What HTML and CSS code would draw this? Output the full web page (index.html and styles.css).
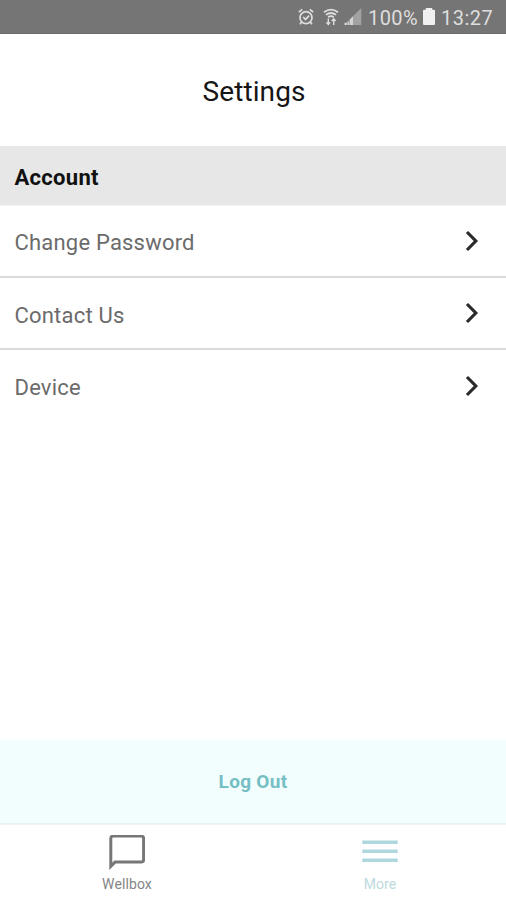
FILE: index.html
```html
<!DOCTYPE html>
<html lang="en">
<head>
<meta charset="utf-8">
<title>Settings</title>
<link rel="stylesheet" href="styles.css">
</head>
<body>
<div class="screen">
  <div class="status">
    <svg class="alarm" width="16" height="18" viewBox="0 0 16 18" fill="none" stroke="#dedede" stroke-width="1.7"><circle cx="8" cy="9.7" r="6"/><path d="M.8 4.2L4.2 1.4M15.2 4.2l-3.4-2.8M3.8 13.8L2 16.3M12.2 13.8L14 16.3M5.2 9l2.3 2.4 3.6-3.8"/></svg>
    <svg class="wifi" width="16" height="18" viewBox="0 0 16 18" fill="none" stroke="#dedede" stroke-width="1.8"><path d="M1 4.2Q8-1 15 4.2M3 6.8Q8 3.2 13 6.8M5.2 9.2Q8 7 10.8 9.2"/><path d="M5.3 10.5v6M3.4 14.4l1.9 2.1 1.9-2.1M10.7 17v-6M8.8 13l1.9-2.1 1.9 2.1" stroke-width="1.4"/></svg>
    <svg class="signal" width="18" height="18" viewBox="0 0 18 18"><path d="M17.3 0v17H9V8.3z" fill="#a2a2a2"/><path d="M5.5 11.8L9 8.3V17H5.5z" fill="#d4d4d4"/><path d="M.6 14.8h2.2V17H.6zM3.5 13.4h1.4V17H3.5z" fill="#dedede"/></svg>
    <span class="percent">100%</span>
    <svg class="battery" width="12" height="17" viewBox="0 0 12 17"><path d="M2.8 0h6.4v1.7H11q1 0 1 1V16q0 1-1 1H1q-1 0-1-1V2.7q0-1 1-1h1.8z" fill="#f0f0f0"/></svg>
    <span class="time">13:27</span>
  </div>
  <header class="header"><h1 class="title">Settings</h1></header>
  <h2 class="section">Account</h2>
  <main class="list">
    <div class="row"><span>Change Password</span><svg class="chevron" width="14" height="22" viewBox="0 0 14 22"><path d="M2 2l8.8 9L2 20"/></svg></div>
    <div class="row"><span>Contact Us</span><svg class="chevron" width="14" height="22" viewBox="0 0 14 22"><path d="M2 2l8.8 9L2 20"/></svg></div>
    <div class="row"><span>Device</span><svg class="chevron" width="14" height="22" viewBox="0 0 14 22"><path d="M2 2l8.8 9L2 20"/></svg></div>
  </main>
  <div class="logout"><span>Log Out</span></div>
  <nav class="tabs">
    <div class="tab">
      <svg width="36" height="36" viewBox="0 0 36 36" fill="none" stroke="#777" stroke-width="3"><path d="M1.8 31.3V3.5q0-2.4 2.4-2.4h28q2.4 0 2.4 2.4v21.2q0 2.4-2.4 2.4H6z"/></svg>
      <span class="tab-label">Wellbox</span>
    </div>
    <div class="tab active">
      <svg width="36" height="36" viewBox="0 0 36 36" fill="#afd7dd"><path d="M.3 5.4h35.4V9H.3zM.3 14.4h35.4V18H.3zM.3 23.4h35.4V27H.3z"/></svg>
      <span class="tab-label">More</span>
    </div>
  </nav>
</div>
</body>
</html>
```
FILE: styles.css
```css
* { box-sizing: border-box; }
body { margin: 0; font-family: Roboto, "Liberation Sans", sans-serif; background: #fff; }
.screen { height: 900px; display: flex; flex-direction: column; overflow: hidden; }
.status {
  height: 34px; flex: none; padding-right: 13px; background: #757575;
  border-bottom: 1px solid #696969; color: #dedede;
  display: flex; align-items: center; justify-content: flex-end;
  font-size: 20px; line-height: 34px;
}
.status span { padding-top: 3px; }
.wifi { margin-left: 9px; }
.signal { margin-left: 5px; }
.percent { margin-left: 6px; width: 52px; letter-spacing: .4px; }
.battery { margin-left: 3px; }
.time { margin-left: 6px; width: 52px; letter-spacing: .5px; }
.header { height: 112px; flex: none; display: flex; align-items: center; justify-content: center; padding: 2px 0 0 2px; }
.title { margin: 0; font-size: 28px; font-weight: 400; letter-spacing: .1px; color: #161616; }
.section {
  margin: 0; height: 60px; flex: none; padding: 2px 14.5px 0; background: #e7e7e7;
  border-bottom: 1px solid #f3f3f3;
  font-size: 22px; line-height: 60px; font-weight: 700; letter-spacing: .3px; color: #111;
}
.list { flex: 1; }
.row {
  height: 72px; padding: 0 27px 0 14.5px; color: #6b6b6b;
  display: flex; align-items: center; justify-content: space-between;
  border-bottom: 2px solid #dadada;
  font-size: 22px; letter-spacing: .2px;
}
.row:last-child { height: 73px; border-bottom-color: transparent; }
.row span { padding-top: 2px; }
.row + .row span { padding-top: 4px; }
.chevron { fill: none; stroke: #2b2b2b; stroke-width: 3.2; }
.logout {
  height: 84px; flex: none; background: #f2fdfd; border-bottom: 1px solid #e9f0f1;
  display: flex; align-items: center; justify-content: center;
  font-size: 19px; font-weight: 700; letter-spacing: .3px; color: #75bfc4;
}
.tabs { height: 76px; flex: none; display: flex; border-top: 1px solid #eff3f4; }
.tab { flex: 1; display: flex; flex-direction: column; align-items: center; padding-top: 10px; color: #858585; }
.tab-label { font-size: 14px; line-height: 16px; margin-top: 5px; padding-left: 1px; letter-spacing: .1px; }
.tab.active { color: #bddadd; }
```
